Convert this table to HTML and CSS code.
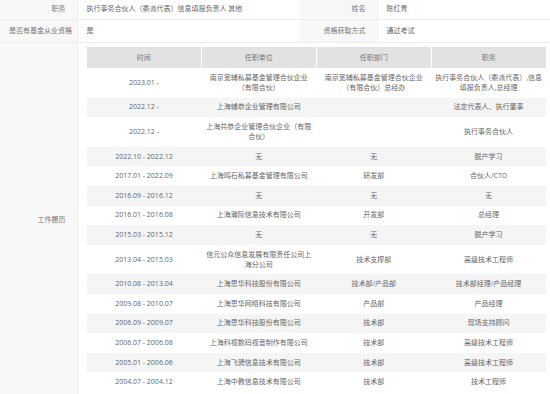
FILE: index.html
```html
<!DOCTYPE html>
<html lang="zh-CN">
<head>
    <meta charset="UTF-8">
    <meta name="viewport" content="width=device-width, initial-scale=1.0">
    <title>基金从业人员信息</title>
    <link rel="stylesheet" href="styles.css">
</head>
<body>
    <table class="info">
        <colgroup>
            <col class="col-label">
            <col class="col-value">
            <col class="col-label2">
            <col>
        </colgroup>
        <tr class="first">
            <td class="label">职务</td>
            <td>执行事务合伙人（委派代表）信息填报负责人 其他</td>
            <td class="label">姓名</td>
            <td>陈红青</td>
        </tr>
        <tr>
            <td class="label">是否有基金从业资格</td>
            <td>是</td>
            <td class="label">资格获取方式</td>
            <td>通过考试</td>
        </tr>
        <tr>
            <td class="label">工作履历</td>
            <td colspan="3" class="history-cell">
                <table class="history">
                    <thead>
                        <tr>
                            <th>时间</th>
                            <th>任职单位</th>
                            <th>任职部门</th>
                            <th>职务</th>
                        </tr>
                    </thead>
                    <tbody>
                        <tr><td>2023.01 -</td><td>南京宽辅私募基金管理合伙企业（有限合伙）</td><td>南京宽辅私募基金管理合伙企业（有限合伙）总经办</td><td>执行事务合伙人（委派代表）,信息填报负责人,总经理</td></tr>
                        <tr><td>2022.12 -</td><td>上海辅恭企业管理有限公司</td><td></td><td>法定代表人、执行董事</td></tr>
                        <tr><td>2022.12 -</td><td>上海共恭企业管理合伙企业（有限合伙）</td><td></td><td>执行事务合伙人</td></tr>
                        <tr><td>2022.10 - 2022.12</td><td>无</td><td>无</td><td>脱产学习</td></tr>
                        <tr><td>2017.01 - 2022.09</td><td>上海鸣石私募基金管理有限公司</td><td>研发部</td><td>合伙人/CTO</td></tr>
                        <tr><td>2016.09 - 2016.12</td><td>无</td><td>无</td><td>无</td></tr>
                        <tr><td>2016.01 - 2016.08</td><td>上海瀚际信息技术有限公司</td><td>开发部</td><td>总经理</td></tr>
                        <tr><td>2015.03 - 2015.12</td><td>无</td><td>无</td><td>脱产学习</td></tr>
                        <tr><td>2013.04 - 2015.03</td><td>信元公众信息发展有限责任公司上海分公司</td><td>技术支撑部</td><td>高级技术工程师</td></tr>
                        <tr><td>2010.08 - 2013.04</td><td>上海思华科技股份有限公司</td><td>技术部/产品部</td><td>技术部经理/产品经理</td></tr>
                        <tr><td>2009.08 - 2010.07</td><td>上海思华网络科技有限公司</td><td>产品部</td><td>产品经理</td></tr>
                        <tr><td>2006.09 - 2009.07</td><td>上海思华科技股份有限公司</td><td>技术部</td><td>现场支持顾问</td></tr>
                        <tr><td>2006.07 - 2006.08</td><td>上海科视数码视音制作有限公司</td><td>技术部</td><td>高级技术工程师</td></tr>
                        <tr><td>2005.01 - 2006.06</td><td>上海飞骋信息技术有限公司</td><td>技术部</td><td>高级技术工程师</td></tr>
                        <tr><td>2004.07 - 2004.12</td><td>上海中教信息技术有限公司</td><td>技术部</td><td>技术工程师</td></tr>
                    </tbody>
                </table>
            </td>
        </tr>
    </table>
</body>
</html>
```

FILE: styles.css
```css
body {
    margin: 0;
    background: white;
    font-family: "Open Sans", "Noto Sans CJK SC", sans-serif;
    font-size: 7px;
    line-height: 10px;
    color: #666;
}
.info {
    width: 550px;
    border-collapse: collapse;
    table-layout: fixed;
}
.col-label {
    width: 77px;
}
.col-value {
    width: 223px;
}
.col-label2 {
    width: 77px;
}
.info > tbody > tr > td {
    padding: 6px 9px;
    border-bottom: 1px solid #eee;
    vertical-align: middle;
    white-space: nowrap;
}
.info > tbody > tr.first > td {
    padding-top: 4px;
    padding-bottom: 5px;
}
.info > tbody > tr > td.label {
    background: #f8f8f8;
    color: #777;
    text-align: right;
    padding-right: 11px;
    border-right: 1px solid #f0f0f0;
}
.info > tbody > tr > td.history-cell {
    padding: 4px 4px 5px 9px;
    white-space: normal;
}
.history {
    width: 100%;
    border-collapse: collapse;
    table-layout: fixed;
}
.history th {
    background: #e2e2e2;
    color: #777;
    font-weight: normal;
    height: 21px;
    padding: 0 3px;
    border-right: 1px solid #fff;
}
.history th:last-child {
    border-right: none;
}
.history td {
    text-align: center;
    padding: 4.8px 3px;
    vertical-align: middle;
}
.history tbody tr:nth-child(even) {
    background: #f5f5f5;
}
```
